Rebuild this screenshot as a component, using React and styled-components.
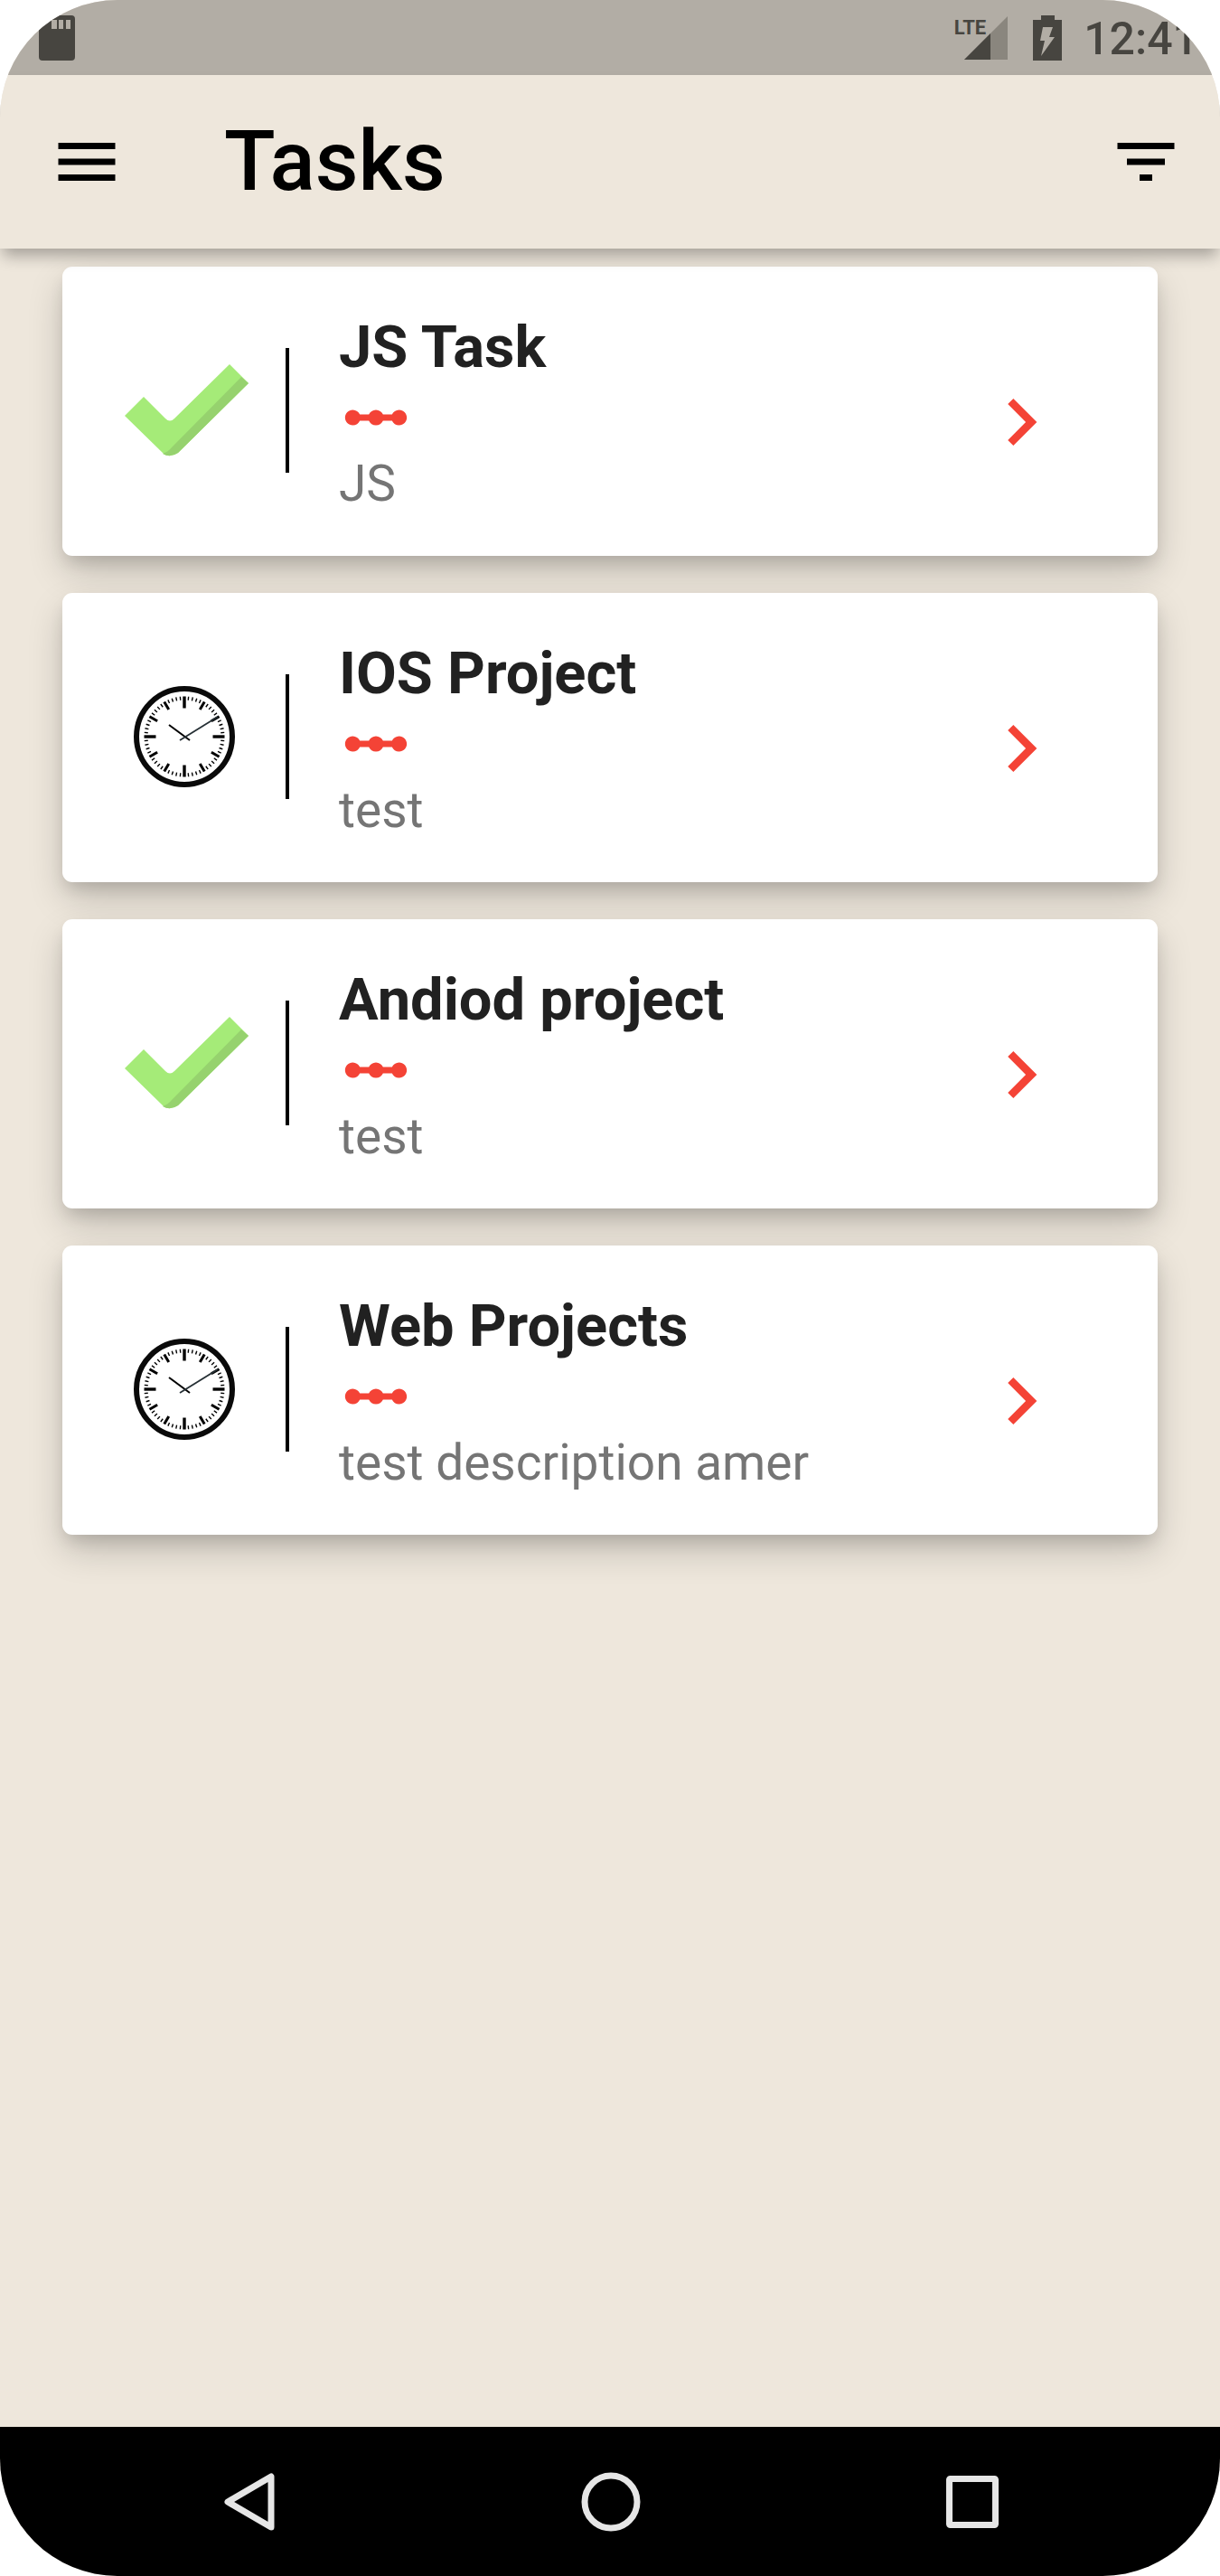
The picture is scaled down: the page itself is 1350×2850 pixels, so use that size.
import React from "react";
import styled, { createGlobalStyle } from "styled-components";

const GlobalStyle = createGlobalStyle`
  *, *::before, *::after { box-sizing: border-box; }
  body {
    margin: 0;
    background: #ffffff;
    font-family: Roboto, "Liberation Sans", sans-serif;
  }
`;

const Screen = styled.div`
  display: flex;
  flex-direction: column;
  min-height: 100vh;
  overflow: hidden;
  border-radius: 130px;
  background: #eee7dc;
`;

const StatusBar = styled.div`
  display: flex;
  align-items: center;
  justify-content: space-between;
  height: 83px;
  padding: 0 24px 0 43px;
  background: #b2ada5;
  color: #474540;
`;

const StatusGroup = styled.div`
  display: flex;
  align-items: center;
`;

const Network = styled.div`
  display: flex;
  align-items: flex-start;
  margin-right: 28px;
`;

const NetworkType = styled.span`
  margin-right: -24px;
  font-size: 22px;
  line-height: 26px;
  font-weight: 700;
`;

const Clock = styled.time`
  margin-left: 24px;
  padding-top: 2px;
  font-size: 50px;
  line-height: 60px;
  font-weight: 500;
`;

const Glyph = styled.svg`
  display: block;
  flex: none;
  width: ${(p) => p.$w}px;
  height: ${(p) => p.$h || p.$w}px;
`;

const AppBar = styled.header`
  position: relative;
  z-index: 1;
  display: flex;
  align-items: center;
  height: 192px;
  padding: 0 40px 0 54px;
  background: #eee7dc;
  box-shadow: 0 11px 16px -3px rgba(0, 0, 0, 0.3);
`;

const IconButton = styled.button`
  display: block;
  flex: none;
  margin: 0;
  padding: 0;
  border: 0;
  background: none;
  color: ${(p) => p.$color || "#000000"};
  cursor: pointer;
`;

const Title = styled.h1`
  flex: 1;
  margin: 0;
  padding-left: 110px;
  font-size: 93px;
  line-height: 108px;
  font-weight: 500;
  color: #000000;
`;

const TaskList = styled.ul`
  flex: 1;
  display: flex;
  flex-direction: column;
  gap: 41px;
  margin: 0;
  padding: 20px 69px;
  list-style: none;
`;

const Card = styled.li`
  display: flex;
  align-items: flex-start;
  gap: 55px;
  padding: 52px 99px 48px 69px;
  border-radius: 11px;
  background: #ffffff;
  box-shadow:
    0 10px 18px -4px rgba(0, 0, 0, 0.13),
    0 18px 40px -2px rgba(0, 0, 0, 0.2);
`;

const Lead = styled.div`
  flex: none;
  width: 182px;
  margin-top: 38px;
  border-right: 4px solid #000000;
`;

const Body = styled.div`
  flex: 1;
  min-width: 0;
`;

const TaskName = styled.h2`
  margin: 0;
  font-size: 65px;
  line-height: 74px;
  font-weight: 700;
  color: #212121;
`;

const TaskText = styled.p`
  margin: 0;
  font-size: 55px;
  line-height: 64px;
  color: #757575;
`;

const Trail = styled.div`
  flex: none;
  padding-top: 68px;
`;

const NavBar = styled.nav`
  display: grid;
  grid-template-columns: repeat(3, 1fr);
  justify-items: center;
  align-items: center;
  height: 165px;
  padding: 0 74px 0 76px;
  background: #000000;
`;

const SdCard = () => (
  <Glyph $w={40} $h={50} viewBox="0 0 40 50" aria-hidden="true">
    <path
      fill="currentColor"
      fillRule="evenodd"
      d="M14 0H36a4 4 0 0 1 4 4V46a4 4 0 0 1-4 4H4a4 4 0 0 1-4-4V14ZM14 5v10h6V5ZM22 5v10h5V5ZM30 5v10h5V5Z"
    />
  </Glyph>
);

const Signal = () => (
  <Glyph $w={48} viewBox="0 0 48 48" aria-hidden="true">
    <path d="M0 48 48 0V48Z" fill="#8a867e" />
    <path d="M0 48 29 19V48Z" fill="currentColor" />
  </Glyph>
);

const Battery = () => (
  <Glyph $w={32} $h={50} viewBox="0 0 32 50" aria-hidden="true">
    <path d="M9 0H24V5H32V50H0V5H9Z" fill="currentColor" />
    <path d="M11 13H22L18 24H24L9 45 13 28H8Z" fill="#b2ada5" />
  </Glyph>
);

const MenuIcon = () => (
  <Glyph $w={84} viewBox="0 0 24 24" aria-hidden="true">
    <path d="M3 18h18v-2H3v2zm0-5h18v-2H3v2zm0-7v2h18V6H3z" fill="currentColor" />
  </Glyph>
);

const FilterIcon = () => (
  <Glyph $w={84} viewBox="0 0 24 24" aria-hidden="true">
    <path d="M10 18h4v-2h-4v2zM3 6v2h18V6H3zm3 7h12v-2H6v2z" fill="currentColor" />
  </Glyph>
);

const LinearScale = () => (
  <Glyph $w={82} viewBox="0 0 24 24" aria-hidden="true">
    <path
      fill="#f44336"
      d="M19.5 9.5c-1.03 0-1.9.62-2.29 1.5h-2.92c-.39-.88-1.26-1.5-2.29-1.5s-1.9.62-2.29 1.5H6.79c-.39-.88-1.26-1.5-2.29-1.5C3.12 9.5 2 10.62 2 12s1.12 2.5 2.5 2.5c1.03 0 1.9-.62 2.29-1.5h2.92c.39.88 1.26 1.5 2.29 1.5s1.9-.62 2.29-1.5h2.92c.39.88 1.26 1.5 2.29 1.5 1.38 0 2.5-1.12 2.5-2.5s-1.12-2.5-2.5-2.5z"
    />
  </Glyph>
);

const ChevronIcon = () => (
  <Glyph $w={104} viewBox="0 0 24 24" aria-hidden="true">
    <path d="M8.59 16.59 13.17 12 8.59 7.41 10 6l6 6-6 6z" fill="currentColor" />
  </Glyph>
);

const DoneIcon = () => (
  <Glyph $w={138} viewBox="0 0 138 138" role="img" aria-label="Done">
    <path
      fill="#a5eb78"
      d="M0 75 21 54 45 78Q50 83 55 78L116 18 137 39 59 116Q50 122 43 117Z"
    />
    <path fill="#96d26e" d="M129 32 137 39 59 116Q50 122 42 117Q48 115 52 110Z" />
  </Glyph>
);

const ticks = Array.from({ length: 60 }, (_, i) => {
  if (i % 15 === 0) return { angle: i * 6, length: 13, width: 3.4 };
  if (i % 5 === 0) return { angle: i * 6, length: 10, width: 3 };
  return { angle: i * 6, length: 4, width: 1.4 };
});

const PendingIcon = () => (
  <Glyph $w={138} viewBox="0 0 138 138" role="img" aria-label="Pending">
    <g transform="translate(66 69)">
      <circle r="53" fill="none" stroke="#0a0a0a" strokeWidth="6" />
      {ticks.map((t) => (
        <line
          key={t.angle}
          y1={-44.5}
          y2={-44.5 + t.length}
          stroke="#000000"
          strokeWidth={t.width}
          transform={`rotate(${t.angle})`}
        />
      ))}
      <path d="M-17-13 6 4" stroke="#000000" strokeWidth="2" />
      <path d="M-5 4 37-22" stroke="#263035" strokeWidth="1.8" />
    </g>
  </Glyph>
);

const BackIcon = () => (
  <Glyph $w={66} viewBox="0 0 66 66" aria-hidden="true">
    <path
      d="M57 5V61L9 33Z"
      fill="none"
      stroke="#e6e6e6"
      strokeWidth="7"
      strokeLinejoin="round"
    />
  </Glyph>
);

const HomeIcon = () => (
  <Glyph $w={66} viewBox="0 0 66 66" aria-hidden="true">
    <circle cx="33" cy="33" r="29" fill="none" stroke="#e6e6e6" strokeWidth="7" />
  </Glyph>
);

const RecentsIcon = () => (
  <Glyph $w={66} viewBox="0 0 66 66" aria-hidden="true">
    <rect
      x="7.5"
      y="7.5"
      width="51"
      height="51"
      rx="1"
      fill="none"
      stroke="#e6e6e6"
      strokeWidth="7"
      strokeLinejoin="round"
    />
  </Glyph>
);

const tasks = [
  { name: "JS Task", text: "JS", done: true },
  { name: "IOS Project", text: "test", done: false },
  { name: "Andiod project", text: "test", done: true },
  { name: "Web Projects", text: "test description amer", done: false },
];

function TaskCard({ name, text, done }) {
  return (
    <Card>
      <Lead>{done ? <DoneIcon /> : <PendingIcon />}</Lead>
      <Body>
        <TaskName>{name}</TaskName>
        <LinearScale />
        <TaskText>{text}</TaskText>
      </Body>
      <Trail>
        <IconButton $color="#f44336" aria-label={`Open ${name}`}>
          <ChevronIcon />
        </IconButton>
      </Trail>
    </Card>
  );
}

export default function App() {
  return (
    <>
      <GlobalStyle />
      <Screen>
        <StatusBar>
          <SdCard />
          <StatusGroup>
            <Network>
              <NetworkType>LTE</NetworkType>
              <Signal />
            </Network>
            <Battery />
            <Clock>12:41</Clock>
          </StatusGroup>
        </StatusBar>
        <AppBar>
          <IconButton aria-label="Open menu">
            <MenuIcon />
          </IconButton>
          <Title>Tasks</Title>
          <IconButton aria-label="Filter tasks">
            <FilterIcon />
          </IconButton>
        </AppBar>
        <TaskList>
          {tasks.map((task) => (
            <TaskCard key={task.name} {...task} />
          ))}
        </TaskList>
        <NavBar aria-label="System">
          <IconButton aria-label="Back">
            <BackIcon />
          </IconButton>
          <IconButton aria-label="Home">
            <HomeIcon />
          </IconButton>
          <IconButton aria-label="Recent apps">
            <RecentsIcon />
          </IconButton>
        </NavBar>
      </Screen>
    </>
  );
}
